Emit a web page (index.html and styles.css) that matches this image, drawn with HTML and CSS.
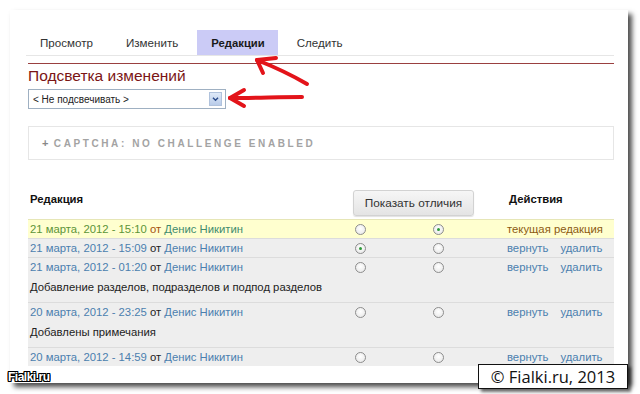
FILE: index.html
```html
<!DOCTYPE html>
<html lang="ru">
<head>
<meta charset="utf-8">
<title>Редакции</title>
<link rel="stylesheet" href="styles.css">
</head>
<body>
<div class="card">
  <ul class="tabs">
    <li class="tab">Просмотр</li>
    <li class="tab">Изменить</li>
    <li class="tab active">Редакции</li>
    <li class="tab">Следить</li>
  </ul>
  <div class="redline"></div>
  <h2 class="heading">Подсветка изменений</h2>
  <div class="select">
    <span class="select-text">&lt; Не подсвечивать &gt;</span>
    <span class="select-arrow">
      <svg width="13" height="14" viewBox="0 0 13 14"><path d="M3.5 5.5 L6.5 8.5 L9.5 5.5" fill="none" stroke="#2a4a8a" stroke-width="1.6"/></svg>
    </span>
  </div>
  <div class="captcha"><span class="plus">+</span> CAPTCHA: NO CHALLENGE ENABLED</div>

  <div class="table">
    <div class="thead">
      <div class="th">Редакция</div>
      <div class="th-btn"><span class="btn">Показать отличия</span></div>
      <div class="th">Действия</div>
    </div>

    <div class="row current">
      <div class="c1"><span class="date">21 марта, 2012 - 15:10</span> <span class="ot">от</span> <span class="name">Денис Никитин</span></div>
      <div class="c2"><span class="radio"></span></div>
      <div class="c3"><span class="radio on"></span></div>
      <div class="c4 cur">текущая редакция</div>
    </div>

    <div class="row">
      <div class="c1"><span class="link">21 марта, 2012 - 15:09</span> от <span class="link">Денис Никитин</span></div>
      <div class="c2"><span class="radio on"></span></div>
      <div class="c3"><span class="radio"></span></div>
      <div class="c4"><span class="link">вернуть</span><span class="link gap">удалить</span></div>
    </div>

    <div class="row">
      <div class="c1"><span class="link">21 марта, 2012 - 01:20</span> от <span class="link">Денис Никитин</span></div>
      <div class="c2"><span class="radio"></span></div>
      <div class="c3"><span class="radio"></span></div>
      <div class="c4"><span class="link">вернуть</span><span class="link gap">удалить</span></div>
      <div class="desc">Добавление разделов, подразделов и подпод разделов</div>
    </div>

    <div class="row">
      <div class="c1"><span class="link">20 марта, 2012 - 23:25</span> от <span class="link">Денис Никитин</span></div>
      <div class="c2"><span class="radio"></span></div>
      <div class="c3"><span class="radio"></span></div>
      <div class="c4"><span class="link">вернуть</span><span class="link gap">удалить</span></div>
      <div class="desc">Добавлены примечания</div>
    </div>

    <div class="row">
      <div class="c1"><span class="link">20 марта, 2012 - 14:59</span> от <span class="link">Денис Никитин</span></div>
      <div class="c2"><span class="radio"></span></div>
      <div class="c3"><span class="radio"></span></div>
      <div class="c4"><span class="link">вернуть</span><span class="link gap">удалить</span></div>
    </div>
  </div>
</div>

<svg class="arrows" width="640" height="394" viewBox="0 0 640 394">
  <g fill="none" stroke="#e3141a" stroke-width="4" stroke-linecap="round" stroke-linejoin="round">
    <path d="M257 60 C 272 66, 290 74, 307 84"/>
    <path d="M257 60 L 276 58"/>
    <path d="M257 60 L 263 73"/>
    <path d="M230 98 C 255 98, 280 97, 302 97"/>
    <path d="M230 98 L 244 90"/>
    <path d="M230 98 L 244 106"/>
  </g>
</svg>

<div class="watermark">Fialki.ru</div>
<div class="copyright">© Fialki.ru, 2013</div>
</body>
</html>
```

FILE: styles.css
```css
* { box-sizing: border-box; }
html, body {
  margin: 0;
  padding: 0;
  background: #fff;
  width: 640px;
  height: 394px;
  overflow: hidden;
  font-family: "Liberation Sans", Arial, sans-serif;
  color: #222;
}
body { position: relative; }

.card {
  margin: 10px 0 0 10px;
  width: 618px;
  height: 373px;
  background: #fff;
  box-shadow: 4px 4px 5px rgba(0,0,0,0.7);
  padding: 20px 14px 0 18px;
}

.tabs {
  list-style: none;
  margin: 0 0 0 -2px;
  padding: 0;
  display: flex;
  gap: 5px;
  height: 26px;
  border-bottom: 1px solid #e6e6e6;
}
.tab {
  padding: 0 14px;
  height: 25px;
  line-height: 26px;
  font-size: 11.6px;
  color: #333;
}
.tab.active {
  background: #cbcbf6;
  font-weight: bold;
  font-size: 11.3px;
  padding: 0 13px 0 14px;
  color: #1a1a1a;
}

.redline {
  margin-top: 7px;
  height: 1px;
  background: #9a4040;
}

.heading {
  margin: 2px 0 3px;
  font-size: 15.5px;
  line-height: 20px;
  font-weight: normal;
  color: #7b1515;
}

.select {
  width: 198px;
  height: 20px;
  border: 1px solid #9fb0c2;
  display: flex;
  align-items: center;
  justify-content: space-between;
  padding: 0 3px 0 4px;
}
.select-text {
  font-size: 10px;
  color: #222;
}
.select-arrow {
  width: 13px;
  height: 14px;
  background: linear-gradient(#dfe9f8, #b8cbe9);
  border: 1px solid #b0c2dc;
  display: flex;
  align-items: center;
  justify-content: center;
}
.select-arrow svg { display: block; }

.captcha {
  margin-top: 17px;
  height: 34px;
  border: 1px solid #e6e6e6;
  padding-left: 13px;
  line-height: 32px;
  font-size: 10px;
  font-weight: bold;
  letter-spacing: 2.6px;
  color: #a3a3a3;
}
.captcha .plus { color: #888; font-size: 11px; letter-spacing: 0; }

.table {
  margin-top: 26px;
  font-size: 11.3px;
}
.thead, .row {
  display: grid;
  grid-template-columns: 325px 78px 76px 1fr;
}
.thead {
  height: 33px;
}
.th {
  font-weight: bold;
  font-size: 11.3px;
  padding: 5px 0 0 2px;
  line-height: 16px;
  color: #111;
}
.th-btn {
  grid-column: 2 / 4;
  padding-top: 4px;
}
.btn {
  display: flex;
  align-items: center;
  justify-content: center;
  width: 121px;
  height: 26px;
  border: 1px solid #d2d2d2;
  border-radius: 3px;
  background: linear-gradient(#f6f6f6, #e4e4e4);
  box-shadow: 0 1px 1px rgba(0,0,0,0.12);
  font-size: 11.8px;
  color: #333;
}

.row {
  background: #eeeeee;
  border-top: 1px solid #dcdcdc;
  line-height: 18px;
}
.row.current {
  background: #ffffcf;
  border-top: 1px solid #e6e6b6;
}
.c1 { padding-left: 2px; white-space: nowrap; color: #222; }
.c2, .c3 { display: flex; align-items: center; padding-left: 2px; }
.c4 { white-space: nowrap; }
.cur { color: #8c5a12; }
.date { color: #5c9438; }
.ot { color: #a3520e; }
.name { color: #3f8c6e; }
.link { color: #4b7fae; }
.gap { margin-left: 12px; }
.desc {
  grid-column: 1 / -1;
  padding: 2px 0 6px 2px;
  color: #222;
}

.radio {
  display: block;
  width: 11px;
  height: 11px;
  border-radius: 50%;
  border: 1px solid #8d8d8d;
  background: radial-gradient(circle at 50% 40%, #ffffff, #e4e4e4);
  position: relative;
}
.radio.on::after {
  content: "";
  position: absolute;
  left: 3px;
  top: 3px;
  width: 3px;
  height: 3px;
  border-radius: 50%;
  background: #2f9a3a;
}

.arrows {
  position: absolute;
  left: 0;
  top: 0;
  pointer-events: none;
}

.watermark {
  position: absolute;
  left: 8px;
  top: 370px;
  font-size: 12px;
  font-weight: bold;
  color: #fff;
  letter-spacing: -0.5px;
  text-shadow: 1px 0 0 #000, -1px 0 0 #000, 0 1px 0 #000, 0 -1px 0 #000, 1px 1px 0 #000, -1px -1px 0 #000, 1px -1px 0 #000, -1px 1px 0 #000;
}

.copyright {
  position: absolute;
  left: 478px;
  top: 364px;
  width: 150px;
  height: 25px;
  background: #fff;
  border: 1px solid #111;
  box-shadow: 3px 3px 3px rgba(0,0,0,0.55);
  font-family: "Open Sans", sans-serif;
  font-size: 16.5px;
  line-height: 23px;
  text-align: center;
  color: #111;
}
```
